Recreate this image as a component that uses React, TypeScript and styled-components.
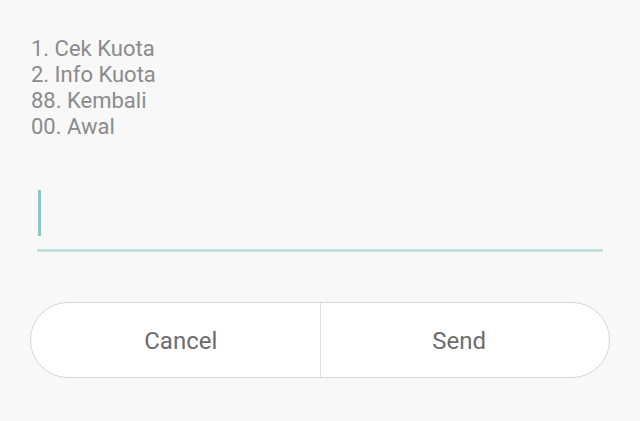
import * as React from 'react'
import styled, { createGlobalStyle } from 'styled-components'

const GlobalStyle = createGlobalStyle`
  html, body {
    margin: 0;
    padding: 0;
    background: #f8f8f8;
    font-family: Roboto, "Liberation Sans", sans-serif;
  }
`

const Page = styled.div`
  width: 640px;
  height: 421px;
  box-sizing: border-box;
  padding: 36px 30px 0 30px;
  display: flex;
  flex-direction: column;
`

const Menu = styled.div`
  font-size: 22px;
  line-height: 26px;
  color: #8b8b8b;
  padding-left: 1px;
`

const Field = styled.div`
  margin: 50px 7px 0 7px;
  padding-bottom: 13px;
  border-bottom: 3px solid #bfe3df;
  display: flex;
`

const Caret = styled.span`
  display: block;
  width: 3px;
  height: 46px;
  margin-left: 1px;
  background: #80cdc4;
`

const Actions = styled.div`
  margin-top: 50px;
  height: 74px;
  display: flex;
  background: #ffffff;
  border: 1px solid #d7d7d7;
  border-radius: 38px;
  overflow: hidden;
`

const Action = styled.button<{ $side: 'left' | 'right' }>`
  flex: 1;
  border: none;
  background: transparent;
  font-family: Roboto, "Liberation Sans", sans-serif;
  font-size: 24px;
  color: #6c6c6c;
  padding: 2px 0 0 0;
  padding-left: ${p => (p.$side === 'left' ? '11px' : '0')};
  padding-right: ${p => (p.$side === 'right' ? '11px' : '0')};
  border-left: ${p => (p.$side === 'right' ? '1px solid #e0e0e0' : 'none')};
  cursor: pointer;
`

const options = ['1. Cek Kuota', '2. Info Kuota', '88. Kembali', '00. Awal']

export default function App() {
  return (
    <>
      <GlobalStyle />
      <Page>
        <Menu>
          {options.map(o => (
            <div key={o}>{o}</div>
          ))}
        </Menu>
        <Field>
          <Caret />
        </Field>
        <Actions>
          <Action $side="left">Cancel</Action>
          <Action $side="right">Send</Action>
        </Actions>
      </Page>
    </>
  )
}
